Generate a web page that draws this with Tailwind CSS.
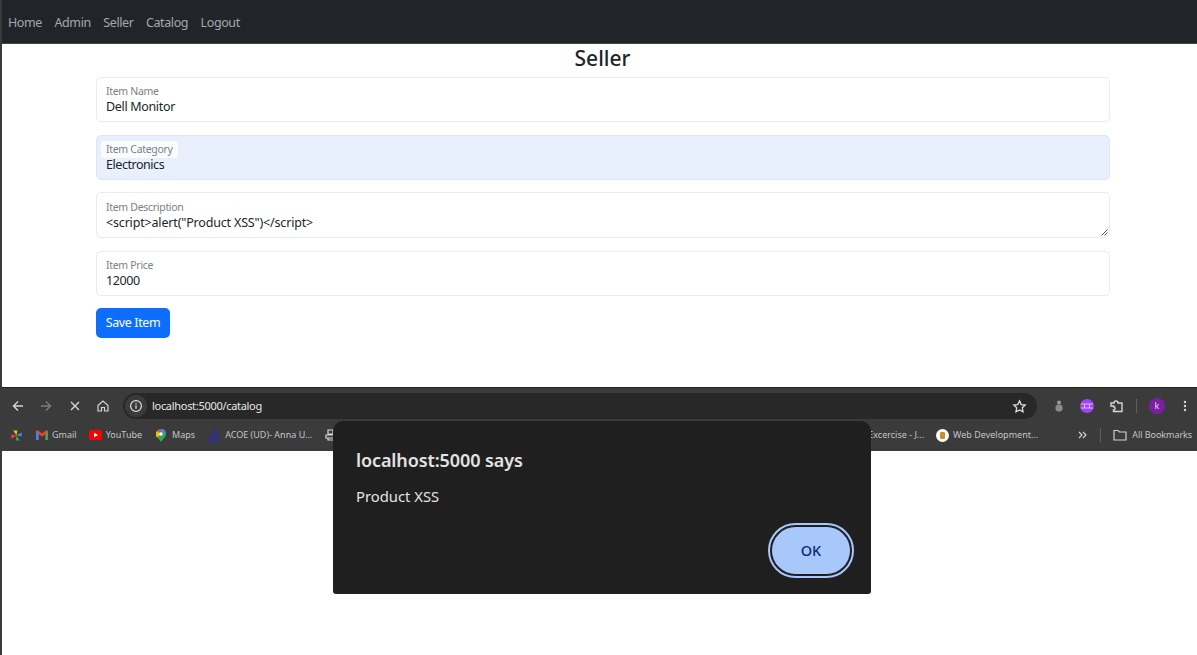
<!DOCTYPE html>
<html lang="en">
<head>
  <meta charset="UTF-8" />
  <title>Seller</title>
  <script src="https://cdn.jsdelivr.net/npm/@tailwindcss/browser@4"></script>
</head>
<body class="relative h-[655px] overflow-hidden bg-white font-['Noto_Sans',sans-serif] border-l-2 border-[#3a3a3a]">
  <nav class="h-[44px] bg-[#212529] flex items-center pl-[6px] pt-[3px] gap-[12.5px] text-[12.5px] tracking-[-0.4px] text-white/60 border-b border-[#444]">
    <a>Home</a><a>Admin</a><a>Seller</a><a>Catalog</a><a>Logout</a>
  </nav>

  <main class="h-[343px] px-[94px]">
    <h1 class="pl-[6px] text-[21px] leading-[28px] font-medium text-center text-[#212529] mb-[5px]">Seller</h1>
    <div class="flex flex-col gap-[13px] w-[1014px]">
      <div class="h-[45px] border border-[#e9ecef] rounded-[5px] px-[9px] pt-[7px]">
        <div class="text-[10.5px] leading-[13px] tracking-[-0.3px] text-[#7b8187]">Item Name</div>
        <div class="text-[12.5px] leading-[18px] tracking-[-0.33px] text-[#212529]">Dell Monitor</div>
      </div>
      <div class="h-[45px] border border-[#dee6f3] bg-[#e8f0fe] rounded-[5px] px-[4px] pt-[5px]">
        <div class="w-fit bg-white/80 rounded-[3px] px-[5px] text-[10.5px] leading-[17px] tracking-[-0.3px] text-[#7b8187]">Item Category</div>
        <div class="px-[5px] text-[12.5px] leading-[13px] tracking-[-0.45px] text-[#212529]">Electronics</div>
      </div>
      <div class="relative h-[46px] -mt-[1px] border border-[#e9ecef] rounded-[5px] px-[9px] pt-[8px]">
        <div class="text-[10.5px] leading-[13px] tracking-[-0.3px] text-[#7b8187]">Item Description</div>
        <div class="text-[12.5px] leading-[18px] tracking-[-0.17px] text-[#212529]">&lt;script&gt;alert("Product XSS")&lt;/script&gt;</div>
        <svg class="absolute right-[1px] bottom-[1px]" width="7" height="7" viewBox="0 0 7 7" fill="none" stroke="#555" stroke-width="1">
          <path d="M0.5 6.5L6.5 0.5M3.5 6.5L6.5 3.5"/>
        </svg>
      </div>
      <div class="h-[45px] border border-[#e9ecef] rounded-[5px] px-[9px] pt-[7px]">
        <div class="text-[10.5px] leading-[13px] tracking-[-0.3px] text-[#7b8187]">Item Price</div>
        <div class="text-[12.5px] leading-[17px] tracking-[-0.4px] text-[#212529]">12000</div>
      </div>
      <button class="w-[74px] h-[30px] -mt-[1px] bg-[#0d6efd] text-white text-[12.5px] tracking-[-0.4px] rounded-[5px]">Save Item</button>
    </div>
  </main>

  <section class="h-[64px] bg-[#3b3b3b] border-t border-[#222] text-[#c7c7c7]">
    <div class="h-[36px] flex items-center pl-[9px]">
      <svg width="14" height="14" viewBox="0 0 14 14" fill="none" stroke="#d5d5d5" stroke-width="1.4"><path d="M12 7H2.5M7 2.5L2.5 7L7 11.5"/></svg>
      <svg class="ml-[14px]" width="14" height="14" viewBox="0 0 14 14" fill="none" stroke="#7d7d7d" stroke-width="1.4"><path d="M2 7h9.5M7 2.5L11.5 7L7 11.5"/></svg>
      <svg class="ml-[15px]" width="14" height="14" viewBox="0 0 14 14" fill="none" stroke="#d5d5d5" stroke-width="1.4"><path d="M3 3l8 8M11 3l-8 8"/></svg>
      <svg class="ml-[14px]" width="14" height="14" viewBox="0 0 14 14" fill="none" stroke="#d5d5d5" stroke-width="1.2"><path d="M2 6.5L7 2l5 4.5V12H8.5V8.5h-3V12H2z"/></svg>
      <div class="ml-[13px] w-[914px] h-[26px] rounded-full bg-[#282828] flex items-center">
        <div class="ml-[2px] w-[22px] h-[22px] rounded-full bg-[#3b3b3b] flex items-center justify-center">
          <svg width="14" height="14" viewBox="0 0 14 14" fill="none" stroke="#e0e0e0" stroke-width="1.2"><circle cx="7" cy="7" r="5.4"/><path d="M7 6.2v3.6M7 4v1.2"/></svg>
        </div>
        <span class="ml-[5px] text-[11px] tracking-[-0.3px] text-[#e6e6e6]">localhost:5000/catalog</span>
        <svg class="ml-auto mr-[10px]" width="15" height="15" viewBox="0 0 24 24" fill="none" stroke="#e0e0e0" stroke-width="2"><path d="M12 3l2.8 5.9 6.4.8-4.7 4.4 1.2 6.4L12 17.4l-5.7 3.1 1.2-6.4L2.8 9.7l6.4-.8z"/></svg>
      </div>
      <svg class="ml-[18px]" width="8" height="12" viewBox="0 0 8 12"><circle cx="4" cy="2.5" r="2" fill="#9a9a9a"/><rect x="0.5" y="4.5" width="7" height="7" rx="3" fill="#8a8a8a"/></svg>
      <svg class="ml-[17px]" width="14" height="14" viewBox="0 0 14 14"><circle cx="7" cy="7" r="7" fill="#a142f4"/><path d="M1 5h12M1 9h12M4.500 5v4M9.500 5v4" stroke="#eadcff" stroke-width="0.8" fill="none"/></svg>
      <svg class="ml-[15px]" width="15" height="15" viewBox="0 0 15 15" fill="none" stroke="#d5d5d5" stroke-width="1.4"><path d="M2 4h3a2 2 0 0 1 4 0h4v8.500H4.500V11a1.600 1.600 0 0 0 0-3.200V7H2z"/></svg>
      <div class="ml-[12px] w-px h-[14px] bg-[#5f5f5f]"></div>
      <div class="ml-[12px] w-[16px] h-[16px] rounded-full bg-[#7b1fa2] text-[#e7d4ee] text-[9px] flex items-center justify-center">k</div>
      <svg class="ml-[18px]" width="4" height="12" viewBox="0 0 4 12" fill="#d5d5d5"><circle cx="2" cy="2" r="1.2"/><circle cx="2" cy="6" r="1.2"/><circle cx="2" cy="10" r="1.2"/></svg>
    </div>
    <div class="h-[22px] flex items-center pl-[8px] text-[9px] text-[#c4c4c4] whitespace-nowrap">
      <svg width="13" height="13" viewBox="0 0 14 14"><path d="M7 7L3.500 1.500h4.500z" fill="#fbbc04"/><path d="M7 7l5.500-3.500v4.500z" fill="#4285f4"/><path d="M7 7l3.500 5.500H6z" fill="#34a853"/><path d="M7 7L1.500 10.500V6z" fill="#ea4335"/></svg>
      <svg class="ml-[13px]" width="12" height="10" viewBox="0 0 12 10"><path d="M0 1v9h2.500V4L6 6.500 9.500 4v6H12V1L10.500 0 6 3.500 1.500 0z" fill="#ea4335"/><path d="M0 1v9h2.500V4z" fill="#4285f4"/><path d="M9.500 4v6H12V1z" fill="#34a853"/></svg>
      <span class="ml-[4px]">Gmail</span>
      <svg class="ml-[12px]" width="13" height="10" viewBox="0 0 13 10"><rect width="13" height="10" rx="2.500" fill="#f00"/><path d="M5 2.800v4.400L9 5z" fill="#fff"/></svg>
      <span class="ml-[4px]">YouTube</span>
      <svg class="ml-[14px]" width="10" height="13" viewBox="0 0 10 13"><path d="M5 0a5 5 0 0 1 5 5c0 3-3 4.500-5 8-2-3.500-5-5-5-8a5 5 0 0 1 5-5z" fill="#34a853"/><path d="M1 2l4 3-4 3.500A5 5 0 0 1 1 2z" fill="#fbbc04"/><path d="M5 0a5 5 0 0 1 5 4L5 5z" fill="#4285f4"/><path d="M1 2A5 5 0 0 1 5 0v3z" fill="#ea4335"/><circle cx="5" cy="5" r="1.700" fill="#fff"/></svg>
      <span class="ml-[6px]">Maps</span>
      <svg class="ml-[12px]" width="13" height="13" viewBox="0 0 13 13" fill="none" stroke="#2a2aa8" stroke-width="1"><path d="M0.500 12.500L7 1l2 0 3 11.500zM4 8h6M6 5l1 7M9 1l-1 11"/></svg>
      <span class="ml-[5px]">ACOE (UD)- Anna U...</span>
      <svg class="ml-[13px]" width="12" height="12" viewBox="0 0 12 12" fill="none" stroke="#d8d8d8" stroke-width="1.200"><path d="M3 1h5v4H3zM1 6h9v3H1zM3 9v2h6V9"/></svg>
      <span class="ml-[531px]">Excercise - J...</span>
      <div class="ml-[12px] w-[13px] h-[13px] rounded-full bg-white flex items-center justify-center">
        <div class="w-[5px] h-[7px] rounded-[1px] bg-[#c8902c]"></div>
      </div>
      <span class="ml-[4px]">Web Development...</span>
      <svg class="ml-[40px]" width="9" height="8" viewBox="0 0 9 8" fill="none" stroke="#d0d0d0" stroke-width="1.200"><path d="M1 1l3 3-3 3M5 1l3 3-3 3"/></svg>
      <div class="ml-[13px] w-px h-[14px] bg-[#5f5f5f]"></div>
      <svg class="ml-[12px]" width="14" height="12" viewBox="0 0 14 12" fill="none" stroke="#d0d0d0" stroke-width="1.200"><path d="M1 1.500h4l1.500 1.500H13v8H1z"/></svg>
      <span class="ml-[5px] tracking-[-0.05px]">All Bookmarks</span>
    </div>
  </section>

  <div class="absolute left-[331px] top-[421px] w-[538px] h-[173px] bg-[#1f1f1f] rounded-t-[10px] rounded-b-[3px] px-[23px] pt-[25px]">
    <div class="text-[18px] leading-[28px] font-semibold tracking-[-0.1px] text-[#e3e3e3]">localhost:5000 says</div>
    <div class="mt-[11px] text-[14.8px] leading-[22px] text-[#e3e3e3]">Product XSS</div>
    <div class="absolute left-[435px] top-[102px] w-[86px] h-[55px] rounded-full border-2 border-[#a8c7fa] p-[2px]">
      <button class="w-full h-full rounded-full bg-[#a8c7fa] text-[#062e6f] text-[14.5px] font-medium">OK</button>
    </div>
  </div>
</body>
</html>
